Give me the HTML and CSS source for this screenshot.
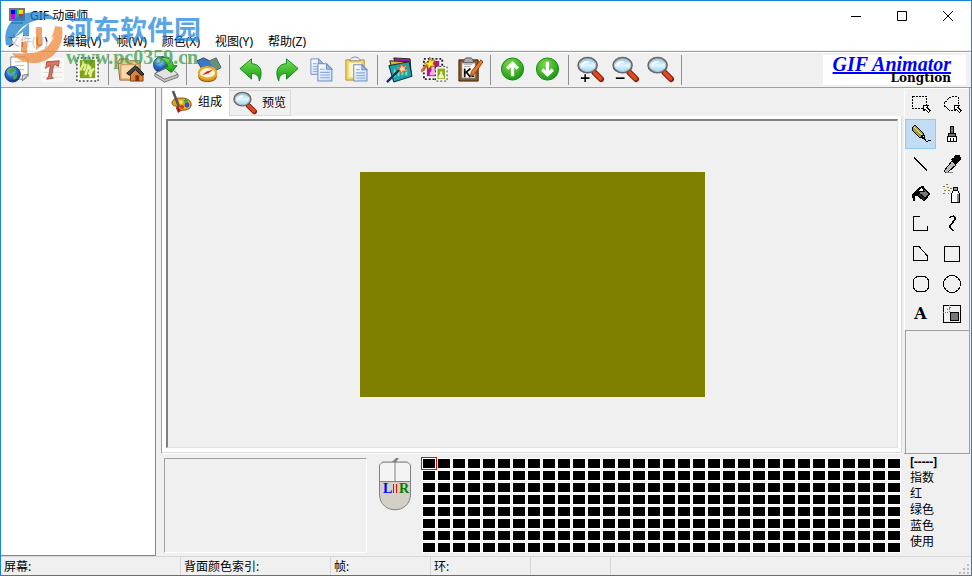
FILE: index.html
```html
<!DOCTYPE html>
<html lang="zh-CN">
<head>
  <meta charset="UTF-8">
  <meta name="viewport" content="width=device-width, initial-scale=1.0">
  <title>GIF 动画师</title>
  <link rel="stylesheet" href="styles.css">
</head>
<body>
  <!-- 共用图形 -->
  <svg class="defs" width="0" height="0" aria-hidden="true">
    <defs>
      <linearGradient id="g-green" x1="0" y1="0" x2="0" y2="1"><stop offset="0" stop-color="#7be052"/><stop offset="1" stop-color="#129a12"/></linearGradient>
      <radialGradient id="g-ball" cx=".4" cy=".3" r=".8"><stop offset="0" stop-color="#7fdc4a"/><stop offset="1" stop-color="#108c10"/></radialGradient>
      <radialGradient id="g-globe" cx=".4" cy=".3" r=".7"><stop offset="0" stop-color="#bfe8ff"/><stop offset=".5" stop-color="#2a72d0"/><stop offset="1" stop-color="#0a2f80"/></radialGradient>
      <linearGradient id="g-page" x1="0" y1="0" x2="1" y2="1"><stop offset="0" stop-color="#ffffff"/><stop offset="1" stop-color="#c5dbfa"/></linearGradient>
      <linearGradient id="g-lens" x1="0" y1="0" x2="0" y2="1"><stop offset="0" stop-color="#7cc8fa"/><stop offset=".5" stop-color="#e4f7ff"/><stop offset="1" stop-color="#8ed4ff"/></linearGradient>
      <symbol id="i-lens" viewBox="0 0 28 28">
        <path d="M18 17l7 7" stroke="#7c1c08" stroke-width="6" stroke-linecap="round"/>
        <path d="M18.500 17.500l6 6" stroke="#e2481c" stroke-width="4" stroke-linecap="round"/>
        <ellipse cx="11" cy="9.500" rx="9.500" ry="7.500" fill="url(#g-lens)" stroke="#666" stroke-width="2.400"/>
        <ellipse cx="11" cy="9.500" rx="8.600" ry="6.600" fill="none" stroke="#ccc"/>
        <path d="M6 10c0-3 3-4 6-4" stroke="#fff" stroke-width="2" fill="none"/>
      </symbol>
      <symbol id="i-undo" viewBox="0 0 28 28">
        <path d="M2 13L14 3v5c8 0 13 7 8 18 0-6-4-8-8-8v6z" fill="url(#g-green)" stroke="#118a20"/>
      </symbol>
      <symbol id="i-sheet" viewBox="0 0 15 18">
        <path d="M1 1h8l5 5v11H1z" fill="url(#g-page)" stroke="#6f8fc8"/>
        <path d="M9 1v5h5z" fill="#9bbcf0" stroke="#6f8fc8"/>
        <path d="M3 6h4M3 9h9M3 11.500h9M3 14h9" stroke="#86a9e0"/>
      </symbol>
    </defs>
  </svg>

  <div class="window">
    <header class="titlebar">
      <svg class="app-icon" viewBox="0 0 16 16">
        <rect width="16" height="13" fill="#777"/><path d="M2 14h12v2H2z" fill="#999"/>
        <path d="M2 2h6v4H2z" fill="#00f"/><path d="M8 2h6v4H8z" fill="#fd0"/><path d="M2 6h6v5H2z" fill="#c0f"/><path d="M8 6h6v5H8z" fill="#e20"/><path d="M6 2h4v9H6z" fill="#0c7" opacity=".7"/>
      </svg>
      <h1>GIF 动画师</h1>
      <div class="win-buttons">
        <button aria-label="最小化"><svg viewBox="0 0 12 12"><path d="M1 6.500h10"/></svg></button>
        <button aria-label="最大化"><svg viewBox="0 0 12 12"><path d="M1.500 1.500h9v9h-9z"/></svg></button>
        <button aria-label="关闭"><svg viewBox="0 0 12 12"><path d="M1 1l10 10M11 1L1 11"/></svg></button>
      </div>
    </header>

    <nav class="menu">
      <button>文件(U)</button>
      <button>编辑(V)</button>
      <button>帧(W)</button>
      <button>颜色(X)</button>
      <button>视图(Y)</button>
      <button>帮助(Z)</button>
    </nav>

    <div class="toolbar">
      <div class="tool-group">
        <button aria-label="新建"><svg viewBox="0 0 28 28"><path d="M7 1h15l3 3v17l-3 3H7z" fill="#fff" stroke="#888"/><path d="M11 6h10M11 10h10M11 14h10" stroke="#bbb"/><path d="M25 19l-6 7v-6z" fill="#ddd" stroke="#777"/><circle cx="9" cy="19" r="8" fill="url(#g-globe)" stroke="#173a7c"/><path d="M4 15l5-3 3 2-3 4-3 1zM9 20l5-1-1 4-3 2z" fill="#46a83b"/></svg></button>
        <button aria-label="文字"><svg viewBox="0 0 28 28"><path d="M2 2h24v25H2z" fill="#fbf8f7"/><path d="M4 7h20M4 12h20M4 17h20M4 22h20" stroke="#e3dddc"/><path d="M8 6l13-1-1 6-3-2-2 1-2 11 2 2-7 1 2-3 2-11-3 1-2 2z" fill="#db7460" stroke="#9c5548"/></svg></button>
        <button aria-label="图片"><svg viewBox="0 0 28 28"><path d="M3 2h22v24H3z" fill="#fff" stroke="#444" stroke-width="1.500" stroke-dasharray="2 2"/><path d="M6 4h16v19H6z" fill="#7fa31b"/><path d="M7 15c0-4 3-4 3-8 3 2 2 5 0 8M12 20c0-5 3-6 3-10 3 2 2 6 0 9M17 22c0-5 1-7 4-9" stroke="#e2ef95" stroke-width="2.500" fill="none"/></svg></button>
      </div>
      <span class="sep"></span>
      <div class="tool-group">
        <button aria-label="打开"><svg viewBox="0 0 28 28"><path d="M1 6l2-3h8l2 2h11v20H3z" fill="#edc68b" stroke="#8b6536"/><path d="M4 9h19l-2 15H4z" fill="#f7d8a6" stroke="#c09058"/><path d="M14 17l7-6 6 7v8H14z" fill="#e08335" stroke="#7a3d12"/><path d="M10 18l9-8 9 9-3 1-6-6-6 6z" fill="#444" stroke="#111"/><path d="M19 20h4v6h-4z" fill="#7a3610"/></svg></button>
        <button aria-label="保存"><svg viewBox="0 0 28 28"><circle cx="10" cy="9" r="8.500" fill="url(#g-globe)" stroke="#356"/><path d="M3 18l15-7 9 8-14 8z" fill="#e2e2e2" stroke="#666"/><path d="M3 18l10 6 14-5v3l-14 5L3 21z" fill="#c4c4c4" stroke="#777"/><path d="M9 2c8-2 13 3 13 8h4l-6 7-8-6h4c0-4-3-6-7-9z" fill="url(#g-green)" stroke="#0b7718"/></svg></button>
      </div>
      <span class="sep"></span>
      <div class="tool-group">
        <button aria-label="浏览"><svg viewBox="0 0 28 28"><path d="M2 5l7-3 6 3 7-3 5 10-7 4-6-4-6 3z" fill="#3a78c9" stroke="#345"/><path d="M15 5l7-3 5 10-7 3z" fill="#679177"/><path d="M4 18v4c0 6 18 6 18 0v-4" fill="#d68d1a" stroke="#7c5010"/><ellipse cx="13" cy="17.500" rx="9" ry="6" fill="#fff5d6" stroke="#eba826" stroke-width="2.500"/><path d="M7 20l5-4 7-2-5 4z" fill="#d22"/></svg></button>
      </div>
      <span class="sep"></span>
      <div class="tool-group">
        <button aria-label="撤消"><svg><use href="#i-undo"/></svg></button>
        <button aria-label="重做"><svg class="flip"><use href="#i-undo"/></svg></button>
        <button aria-label="复制"><svg viewBox="0 0 28 28"><use href="#i-sheet" x="2" y="2" width="15" height="18"/><use href="#i-sheet" x="9" y="7" width="17" height="20"/></svg></button>
        <button aria-label="粘贴"><svg viewBox="0 0 28 28"><path d="M3 4h19v21H3z" fill="#f6d56e" stroke="#b39233"/><path d="M6 7h13v15H6z" fill="#fff4c4"/><path d="M7 5c0-2 3-4 5.500-4S18 3 18 5z" fill="#eee" stroke="#888"/><use href="#i-sheet" x="10" y="8" width="16" height="19"/></svg></button>
      </div>
      <span class="sep"></span>
      <div class="tool-group">
        <button aria-label="图片向导"><svg viewBox="0 0 28 28"><path d="M8 2l17 1 1 14-14-1z" fill="#a51ba8" stroke="#222"/><path d="M4 5l20 1 2 13-18 2z" fill="#dbb91c" stroke="#222"/><path d="M3 10l21-4 3 15-19 6z" fill="#18a3ad" stroke="#123"/><path d="M9 14v8M13 12v9M17 15v5M21 14v6" stroke="#7fe4b0" stroke-width="2"/><path d="M1 27L14 14" stroke="#152c68" stroke-width="2.500"/><path d="M16 8l1.500 3 4-1-2 3 2 3-4-.5-2 3-1-4-3-1 3-1z" fill="#ffd7a1" stroke="#e05c22"/></svg></button>
        <button aria-label="动画向导"><svg viewBox="0 0 28 28"><path d="M3 3h19v21H3z" fill="#fff" stroke="#222" stroke-width="2" stroke-dasharray="2 2"/><path d="M6 5h13v16H6z" fill="#b8158a"/><path d="M9 20c0-4 2-4 2-6-2-4 5-4 3 0 0 2 3 2 3 6" fill="#f4b7e1"/><path d="M15 11h12v15H15z" fill="#fff" stroke="#333" stroke-dasharray="2 2"/><path d="M17 13h8v11h-8z" fill="#8baf1c"/><path d="M18 23c0-4 2-3 2-5-1-3 3-3 2 0 0 2 2 2 2 5z" fill="#effac0"/><path d="M0 16L7 9" stroke="#d36b1d" stroke-width="3"/><path d="M9 1l1.500 4 4-1-2 4 2 3-4-.5-3 3-.5-4-4-2 5-1z" fill="#ffe72b" stroke="#8b6b00" stroke-width=".7"/></svg></button>
        <button aria-label="文字向导"><svg viewBox="0 0 28 28"><path d="M3 4h20v22H3z" fill="#8e5621" stroke="#3e260f"/><path d="M6 7h14v16H6z" fill="#fff" stroke="#777"/><path d="M8 5l2-3h6l2 3v2H8z" fill="#aaa" stroke="#555"/><path d="M8 9h9M8 11h7" stroke="#aaa"/><path d="M9 13v9M15 13l-6 5M11 17l4 5M16 21h3" stroke="#111" stroke-width="1.800"/><path d="M26 4l2 2-9 13-4 2 1-5z" fill="#f1762a" stroke="#87400f"/></svg></button>
      </div>
      <span class="sep"></span>
      <div class="tool-group">
        <button aria-label="上移"><svg viewBox="0 0 28 28"><circle cx="14" cy="13.500" r="11.500" fill="url(#g-ball)" stroke="#178b15"/><path d="M14 21V8M8.500 13L14 7.500l5.500 5.500" fill="none" stroke="#fff" stroke-width="3.400"/></svg></button>
        <button aria-label="下移"><svg viewBox="0 0 28 28"><circle cx="14" cy="13.500" r="11.500" fill="url(#g-ball)" stroke="#178b15"/><path d="M14 6v13M8.500 14l5.500 5.500 5.500-5.500" fill="none" stroke="#fff" stroke-width="3.400"/></svg></button>
      </div>
      <span class="sep"></span>
      <div class="tool-group">
        <button aria-label="放大"><svg viewBox="0 0 28 28"><use href="#i-lens"/><path d="M4 23h9M8.500 19v8" stroke="#fff" stroke-width="3"/><path d="M4 23h9M8.500 19v8" stroke="#000" stroke-width="1.700"/></svg></button>
        <button aria-label="缩小"><svg viewBox="0 0 28 28"><use href="#i-lens"/><path d="M4 23h9" stroke="#000" stroke-width="1.700"/></svg></button>
        <button aria-label="原始大小"><svg viewBox="0 0 28 28"><use href="#i-lens"/></svg></button>
      </div>
      <span class="sep"></span>
      <div class="brand">
        <a href="#">GIF Animator</a>
        <span>Longtion</span>
      </div>
    </div>

    <main class="main">
      <aside class="frames"></aside>

      <div class="work">
        <div class="upper">
          <section class="editor">
            <div class="tabs" role="tablist">
              <button class="tab active" role="tab" aria-selected="true">
                <svg viewBox="0 0 24 24"><path d="M3 13c0-4 5-5 9-5 7 0 11 3 10 8-1 4-8 5-13 4-2-1 0-3-2-4-2 0-4-1-4-3z" fill="#e8a51c" stroke="#7b5314"/><circle cx="12" cy="12" r="2" fill="#f6e04a"/><circle cx="17" cy="11" r="2" fill="#29b23b"/><circle cx="18" cy="15" r="2.400" fill="#244fd1"/><circle cx="13" cy="17" r="2" fill="#d9302a"/><path d="M4 1l6 16" stroke="#555" stroke-width="2.500"/><path d="M9 16l3 5-3 2-2-5z" fill="#a32015"/></svg>
                组成
              </button>
              <button class="tab" role="tab" aria-selected="false">
                <svg><use href="#i-lens"/></svg>
                预览
              </button>
            </div>
            <div class="panel">
              <div class="canvas"><div class="picture"></div></div>
            </div>
          </section>

          <aside class="tools">
            <div class="tool-grid">
              <button aria-label="矩形选择"><svg viewBox="0 0 20 20"><path d="M1.500 2.500h14v12h-14z" stroke-dasharray="2 1"/><path d="M12.500 11.500h5l-1.500 2 3 3-1.500 2-3-3-2 1z" fill="#fff"/></svg></button>
              <button aria-label="套索选择"><svg viewBox="0 0 20 20"><path d="M11 16H7c-1-3-5-2-5-6 0-3 4-2 4-5 2-3 4-1 7-3 4 0 5 3 3 5v4" stroke-dasharray="2 1"/><path d="M12.500 11.500h5l-1.500 2 3 3-1.500 2-3-3-2 1z" fill="#fff"/></svg></button>
              <button class="selected" aria-label="铅笔"><svg viewBox="0 0 20 20"><path d="M1 4l3-3 8 8 2 6-6-2-6-6z" fill="#a59d3b"/><path d="M3 3l8 8" stroke="#eee99b"/><path d="M10 12l4 3-1-4z" fill="#fff"/><path d="M13 15l2 2h2l1-1h2"/></svg></button>
              <button aria-label="画刷"><svg viewBox="0 0 20 20"><path d="M8.500 2h3v7h-3z" fill="#777"/><path d="M6.500 9.500h7v3h-7z" fill="#777"/><path d="M5.500 12.500h9v5h-9z" fill="#fff"/><path d="M8.500 14v3M11.500 14v3"/></svg></button>
              <button aria-label="直线"><svg viewBox="0 0 20 20"><path d="M3 4l13 12" stroke-width="1.500"/></svg></button>
              <button aria-label="吸管"><svg viewBox="0 0 20 20"><path d="M10 5l5 5M11 6l3-4 3 0 1 3-4 4z" fill="#000" stroke-width="2"/><path d="M10 7l4 4-8 7H3l-1-1z" fill="#bbb"/><path d="M4 18h7" stroke="#888"/></svg></button>
              <button aria-label="填充"><svg viewBox="0 0 20 20"><path d="M4 8l7-6 8 8-6 7-8-7z" fill="#222"/><path d="M8 9l5-4 5 5-4 4z" fill="#777"/><path d="M8 7L13 2M3 17c-3-7-1-9 4-9l1 2-4 2z" fill="#000"/><path d="M7 7l4-4 2 4z" fill="#fff"/></svg></button>
              <button aria-label="喷枪"><svg viewBox="0 0 20 20"><path d="M9.500 9.500l2-3h4l2 3v9h-8z" fill="#fff"/><path d="M11 3h4v3h-4z" fill="#999"/><path d="M16 10v8" stroke="#888" stroke-width="2"/><path d="M1 2h2M5 3h2M8 4h2M2 6h2M6 6h2M1 9h2M6 9h1M4 0h2" stroke="#877d35"/></svg></button>
              <button aria-label="折线"><svg viewBox="0 0 20 20"><path d="M9 2.500H2.500v14h14V12"/></svg></button>
              <button aria-label="曲线"><svg viewBox="0 0 20 20"><path d="M8 4c2-3 6-2 5 1-1 4-6 5-5 8 1 2 2 2 4 4" stroke-width="1.500"/></svg></button>
              <button aria-label="多边形"><svg viewBox="0 0 20 20"><path d="M2.500 2.500H8l8 9v5H2.500z"/></svg></button>
              <button aria-label="矩形"><svg viewBox="0 0 20 20"><path d="M2.500 2.500h15v15h-15z"/></svg></button>
              <button aria-label="圆角矩形"><svg viewBox="0 0 20 20"><rect x="2.500" y="2.500" width="15" height="15" rx="5"/></svg></button>
              <button aria-label="椭圆"><svg viewBox="0 0 20 20"><circle cx="10" cy="10" r="8.500"/></svg></button>
              <button class="letter">A</button>
              <button aria-label="热点"><svg viewBox="0 0 20 20"><path d="M1.500 1.500h17v17h-17z"/><path d="M8.500 8.500h8v8h-8z" fill="#777"/><path d="M1 8h6M7 1v7M5 6l5-3" stroke="#777" stroke-dasharray="1 1"/></svg></button>
            </div>
            <div class="tool-options"></div>
          </aside>
        </div>

        <div class="lower">
          <div class="preview"></div>
          <svg class="mouse" viewBox="0 0 34 54">
            <path d="M1.500 7l3-3h25l3 3v29c0 21-31 21-31 0z" fill="#d4d0c8" stroke="#808080"/>
            <path d="M2 7l3-2h24l3 2v16H2z" fill="#f4f4f4"/>
            <path d="M17 4v20M1 23.500h32" stroke="#808080"/><path d="M14 4l4-4h3l-3 4z" fill="#808080"/>
            <path d="M15.500 26v9M18.500 26v9" stroke="#f00"/>
            <text x="5" y="35" fill="#00f">L</text><text x="21" y="35" fill="#008000">R</text>
          </svg>
          <div class="palette" id="palette"></div>
          <div class="info">
            <b>[-----]</b>
            <span>指数</span>
            <span>红</span>
            <span>绿色</span>
            <span>蓝色</span>
            <span>使用</span>
          </div>
        </div>
      </div>
    </main>

    <footer class="status">
      <span class="wide">屏幕:</span>
      <span class="medium">背面颜色索引:</span>
      <span class="small">帧:</span>
      <span class="small">环:</span>
      <span class="tiny"></span>
      <svg class="grip" viewBox="0 0 12 12"><path d="M8 0h2v2H8zM4 4h2v2H4zM8 4h2v2H8zM0 8h2v2H0zM4 8h2v2H4zM8 8h2v2H8z" fill="#bbb"/></svg>
    </footer>
  </div>

  <div class="watermark">
    <svg viewBox="0 0 60 54">
      <path d="M2 34C-2 14 12 0 34 1c8 0 14 3 18 8C32 5 12 14 8 35z" fill="#1b7fcb"/>
      <path d="M58 16c3 20-10 36-29 36-9 0-17-4-21-10 22 3 40-6 43-27z" fill="#f08a3c"/>
      <path d="M8 28L25 12v13h7V12h8v21l10-8C45 38 35 43 23 42V31h-6v10c-6-2-8-6-9-13z" fill="#fff"/>
      <path d="M8 28L25 12v13h-6v-4z" fill="#2686cf"/>
      <path d="M17 31h6v12l-6-2zM32 16h6v18l-6 5z" fill="#ef8435"/>
    </svg>
    <div class="watermark-text">
      <strong>河东软件园</strong>
      <em>www.pc0359.cn</em>
    </div>
  </div>

  <script>
    // 256 色调色板，32 列 x 8 行
    const palette = document.getElementById('palette');

    for (let i = 0; i < 256; i++) {
      const cell = document.createElement('button');
      cell.className = i === 0 ? 'color current' : 'color';
      cell.setAttribute('aria-label', '颜色 ' + i);
      palette.appendChild(cell);
    }

    palette.addEventListener('click', function(e) {
      if (!e.target.classList.contains('color')) return;
      palette.querySelector('.current').classList.remove('current');
      e.target.classList.add('current');
    });
  </script>
</body>
</html>
```

FILE: styles.css
```css
* {
  box-sizing: border-box;
}

body {
  margin: 0;
  font-family: "Noto Sans", "Noto Sans CJK SC", sans-serif;
  font-size: 12px;
  line-height: 16px;
  color: #000;
}

button {
  margin: 0;
  padding: 0;
  border: 0;
  background: none;
  font: inherit;
  color: inherit;
}

svg {
  display: block;
}

.defs {
  position: absolute;
}

.window {
  display: flex;
  flex-direction: column;
  height: 100vh;
  border: 1px solid #1883d7;
  background: #f0f0f0;
}

/* 标题栏 */
.titlebar {
  display: flex;
  align-items: center;
  height: 30px;
  padding-left: 8px;
  background: #fff;
}

.app-icon {
  width: 16px;
  height: 16px;
}

.titlebar h1 {
  margin: 0 0 0 5px;
  font-size: 12px;
  font-weight: normal;
}

.win-buttons {
  display: flex;
  margin-left: auto;
}

.win-buttons button {
  width: 46px;
  height: 30px;
}

.win-buttons svg {
  width: 12px;
  height: 12px;
  margin: 0 auto;
  fill: none;
  stroke: #000;
}

/* 菜单 */
.menu {
  display: flex;
  gap: 15px;
  height: 20px;
  padding: 2px 0 0 7px;
  background: #fff;
  border-bottom: 1px solid #f0f0f0;
}

/* 工具栏 */
.toolbar {
  display: flex;
  align-items: center;
  height: 37px;
  border-top: 1px solid #a0a0a0;
  border-bottom: 1px solid #a0a0a0;
  box-shadow: inset 0 1px #fff;
}

.tool-group {
  display: flex;
}

.tool-group button {
  width: 35px;
  height: 33px;
  padding-left: 3px;
}

.tool-group svg {
  width: 27px;
  height: 27px;
  fill: none;
}

.tool-group .flip {
  transform: scaleX(-1);
}

.sep {
  width: 1px;
  height: 30px;
  margin: 0 5px 0 2px;
  background: #909090;
}

.brand {
  display: flex;
  flex-direction: column;
  align-items: flex-end;
  width: 143px;
  height: 30px;
  margin-left: auto;
  margin-right: 5px;
  padding: 1px 15px 0 0;
  background: #fff;
  font-family: "DejaVu Serif", "Liberation Serif", serif;
  font-weight: bold;
  font-size: 12px;
  line-height: 12px;
}

.brand a {
  color: #00f;
  font-family: "Liberation Serif", serif;
  font-size: 20px;
  line-height: 16px;
  font-style: italic;
  white-space: nowrap;
}

/* 主区域 */
.main {
  display: flex;
  flex: 1;
  min-height: 0;
}

.frames {
  flex: 0 0 155px;
  background: #fff;
  border-right: 1px solid #828790;
  border-bottom: 1px solid #828790;
}

.work {
  display: flex;
  flex-direction: column;
  flex: 1;
  min-width: 0;
  margin-left: 5px;
}

.upper {
  display: flex;
  flex: 1;
  gap: 2px;
  min-height: 0;
  padding-right: 1px;
}

.editor {
  display: flex;
  flex-direction: column;
  flex: 1;
  min-width: 0;
  border-left: 1px solid #a0a0a0;
  border-bottom: 1px solid #fff;
}

.tabs {
  display: flex;
  align-items: flex-end;
  height: 28px;
  padding-left: 1px;
}

.tab {
  display: flex;
  align-items: center;
  gap: 5px;
  height: 26px;
  padding: 0 4px 0 3px;
  border: 1px solid #d9d9d9;
  border-left: 0;
}

.tab.active {
  height: 28px;
  padding: 0 7px 0 6px;
  background: #fff;
  border-bottom: 0;
  border-top: 0;
}

.tab svg {
  width: 24px;
  height: 24px;
  fill: none;
}

.panel {
  display: flex;
  flex: 1;
  padding: 3px 3px 4px 4px;
  background: #fff;
  border-right: 1px solid #d9d9d9;
  border-bottom: 1px solid #d9d9d9;
}

.canvas {
  display: flex;
  flex: 1;
  align-items: center;
  justify-content: center;
  background: #f0f0f0;
  border: 1px solid #e3e3e3;
  border-top: 2px solid #808080;
  border-left: 2px solid #808080;
}

.picture {
  width: 345px;
  height: 225px;
  background: #808000;
}

/* 绘图工具 */
.tools {
  display: flex;
  flex-direction: column;
  width: 66px;
  border-right: 1px solid #a0a0a0;
  border-bottom: 1px solid #a0a0a0;
}

.tool-grid {
  display: grid;
  grid-template-columns: 31px 31px;
  grid-auto-rows: 30px;
  padding-bottom: 1px;
  border-left: 1px solid #fff;
  border-top: 1px solid #fff;
}

.tool-grid button {
  display: flex;
  align-items: center;
  justify-content: center;
}

.tool-grid .selected {
  background: #c2dcf3;
  border: 1px solid #90c8f6;
}

.tool-grid svg {
  width: 20px;
  height: 20px;
  fill: none;
  stroke: #000;
  shape-rendering: crispEdges;
}

.tool-grid .letter {
  font-family: "DejaVu Serif", serif;
  font-size: 16px;
  font-weight: bold;
}

.tool-options {
  flex: 1;
  margin-left: 1px;
  border-top: 1px solid #a0a0a0;
  border-left: 1px solid #a0a0a0;
}

/* 底部 */
.lower {
  display: flex;
  align-items: flex-start;
  height: 102px;
  padding: 4px 0 0 3px;
}

.preview {
  width: 203px;
  height: 95px;
  border: 1px solid #fff;
  border-top-color: #a0a0a0;
  border-left-color: #a0a0a0;
}

.mouse {
  width: 34px;
  height: 54px;
  margin: 0 10px 0 11px;
  font-family: "Liberation Serif", serif;
  font-size: 14px;
  font-weight: bold;
}

.palette {
  display: grid;
  grid-template-columns: repeat(32, 14px);
  grid-auto-rows: 11px;
  gap: 1px;
}

.color {
  background: #000;
  border: 1px solid #fff;
}

.color.current {
  z-index: 1;
  outline: 1px solid #f00;
}

.info {
  display: flex;
  flex-direction: column;
  margin: -4px 0 0 9px;
}

/* 状态栏 */
.status {
  display: flex;
  height: 19px;
  border-top: 1px solid #d7d7d7;
}

.status span {
  height: 18px;
  padding: 2px 0 0 3px;
  border-right: 1px solid #d7d7d7;
}

.status .wide {
  width: 180px;
}

.status .medium {
  width: 150px;
}

.status .small {
  width: 100px;
}

.status .tiny {
  width: 80px;
}

.grip {
  width: 12px;
  height: 12px;
  margin: 7px 0 0 auto;
}

/* 水印 */
.watermark {
  position: absolute;
  top: 11px;
  left: 4px;
  display: flex;
  gap: 2px;
  opacity: 0.75;
  pointer-events: none;
}

.watermark svg {
  width: 60px;
  height: 54px;
}

.watermark-text {
  display: flex;
  flex-direction: column;
}

.watermark strong {
  color: #2688dc;
  font-family: "Noto Sans CJK SC", sans-serif;
  font-size: 27px;
  line-height: 36px;
}

.watermark em {
  color: #3f9e4d;
  font-family: "Liberation Serif", serif;
  font-size: 20px;
  font-style: normal;
  font-weight: bold;
  line-height: 20px;
}
```
